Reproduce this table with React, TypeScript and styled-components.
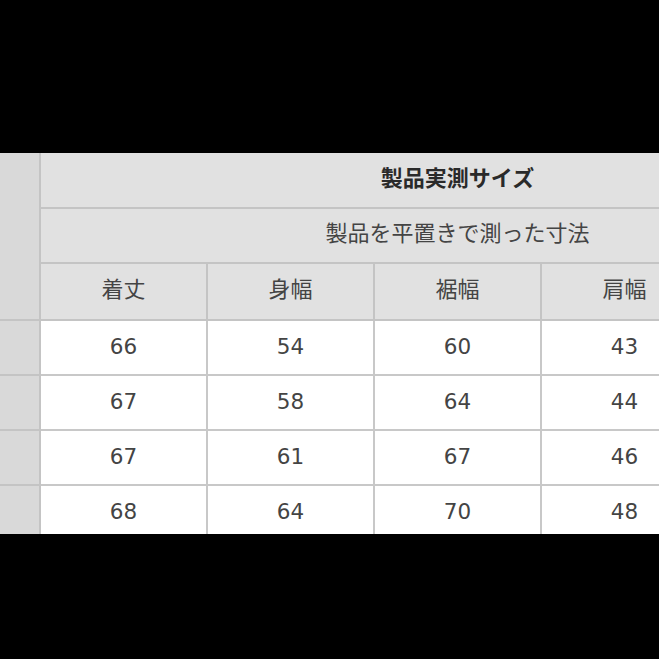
import * as React from 'react';
import styled, { createGlobalStyle } from 'styled-components';

const GlobalStyle = createGlobalStyle`
  html, body {
    margin: 0;
    padding: 0;
    background: #000;
  }
  #root {
    width: 659px;
    height: 659px;
    overflow: hidden;
  }
`;

const Page = styled.div`
  width: 659px;
  height: 659px;
  background: #000;
  padding-top: 153px;
  box-sizing: border-box;
`;

const Viewport = styled.div`
  width: 659px;
  height: 381px;
  overflow: hidden;
  background: #fff;
`;

const SizeTable = styled.table`
  border-collapse: collapse;
  table-layout: fixed;
  width: 875px;
  font-family: "DejaVu Sans", "Noto Sans CJK JP", sans-serif;
  color: #444;
`;

const HeadCell = styled.th<{ $bold?: boolean; $h: number }>`
  height: ${(p) => p.$h}px;
  padding: 0 0 9px;
  background: #e1e1e1;
  border: 2px solid #c4c4c4;
  border-top: none;
  font-family: "Noto Sans CJK JP", sans-serif;
  font-size: 22px;
  font-weight: ${(p) => (p.$bold ? 700 : 400)};
  color: ${(p) => (p.$bold ? '#2a2a2a' : '#444')};
  text-align: center;
  vertical-align: middle;
`;

const SideCell = styled.td`
  padding: 0;
  background: #d9d9d9;
  border: 2px solid #c4c4c4;
  border-left: none;
  border-top: none;
`;

const ValueCell = styled.td`
  height: 50px;
  padding: 0 0 3px;
  background: #fff;
  border: 2px solid #c8c8c8;
  font-size: 21.5px;
  text-align: center;
  vertical-align: middle;
`;

// the fifth column runs past the right edge of the picture, so it stays blank
const columns = ['着丈', '身幅', '裾幅', '肩幅', ''];

const rows = [
  [66, 54, 60, 43],
  [67, 58, 64, 44],
  [67, 61, 67, 46],
  [68, 64, 70, 48],
];

export default function App() {
  return (
    <Page>
      <GlobalStyle />
      <Viewport>
        <SizeTable>
          <colgroup>
            <col style={{ width: 40 }} />
            {columns.map((c, i) => (
              <col key={i} style={{ width: 167 }} />
            ))}
          </colgroup>
          <thead>
            <tr>
              <SideCell as="th" rowSpan={3} />
              <HeadCell colSpan={5} $h={45} $bold>
                製品実測サイズ
              </HeadCell>
            </tr>
            <tr>
              <HeadCell colSpan={5} $h={44}>
                製品を平置きで測った寸法
              </HeadCell>
            </tr>
            <tr>
              {columns.map((c, i) => (
                <HeadCell key={i} $h={46}>
                  {c}
                </HeadCell>
              ))}
            </tr>
          </thead>
          <tbody>
            {rows.map((r, i) => (
              <tr key={i}>
                <SideCell />
                {r.map((v, j) => (
                  <ValueCell key={j}>{v}</ValueCell>
                ))}
                <ValueCell />
              </tr>
            ))}
          </tbody>
        </SizeTable>
      </Viewport>
    </Page>
  );
}
